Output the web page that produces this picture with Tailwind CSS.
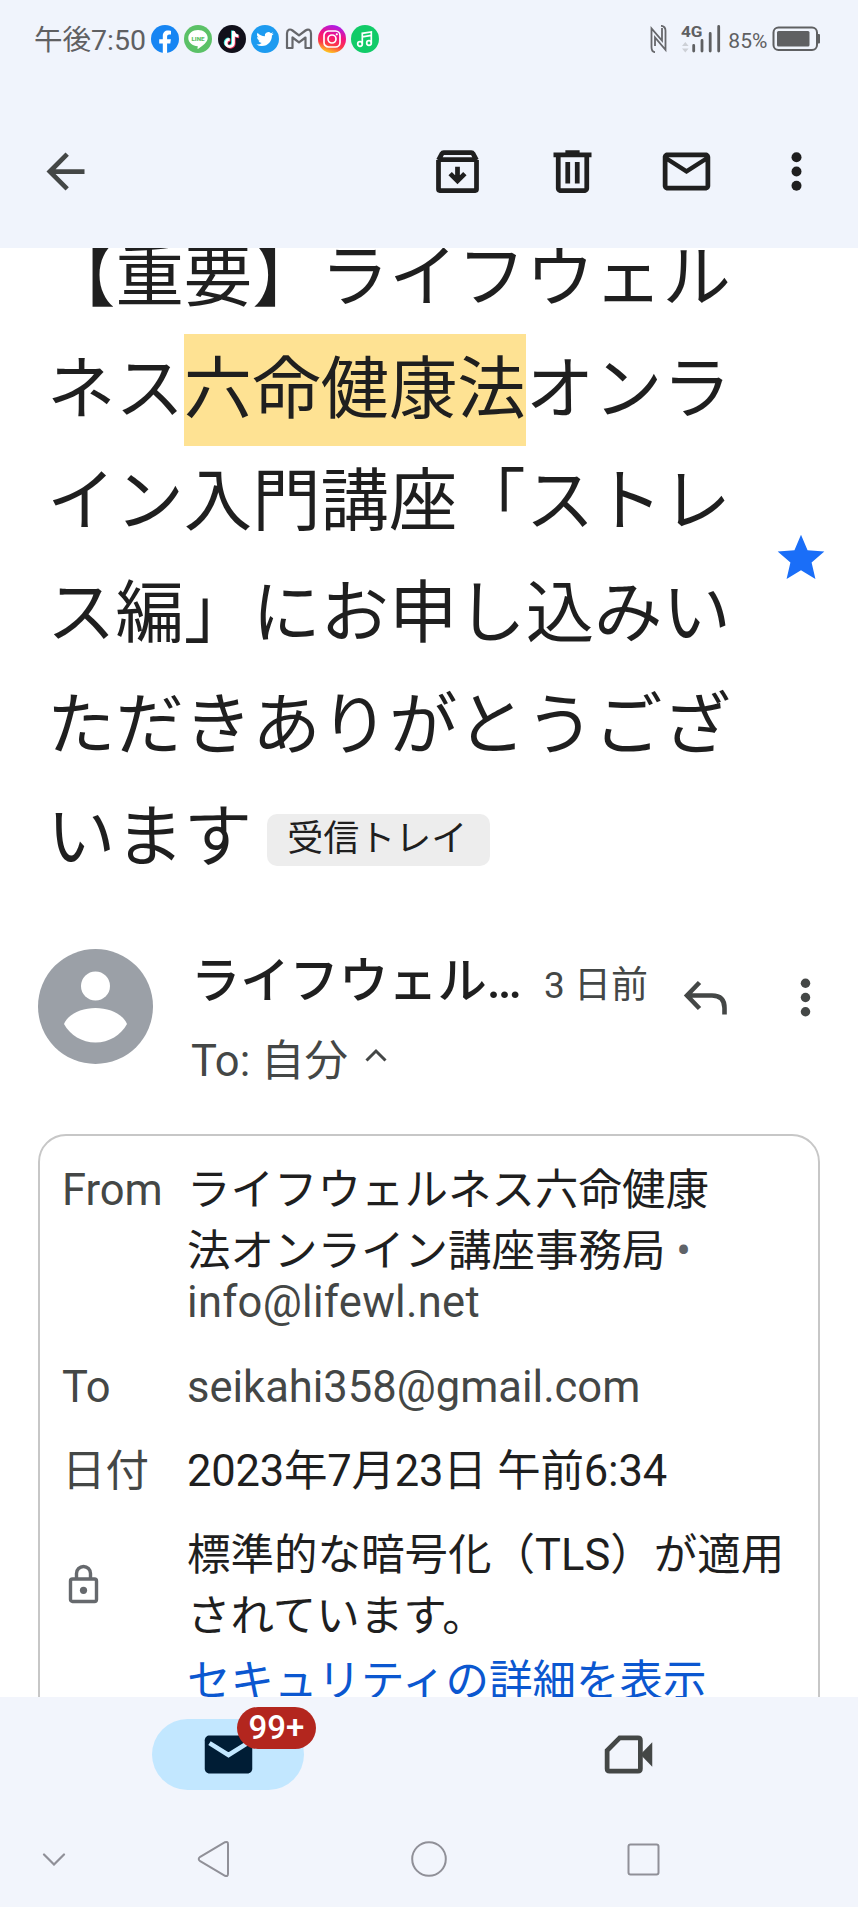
<!DOCTYPE html>
<html lang="ja">
<head>
<meta charset="utf-8">
<title>Gmail</title>
<script src="https://cdn.jsdelivr.net/npm/@tailwindcss/browser@4"></script>
</head>
<body class="bg-white">
<div class="flex h-[1907px] w-[858px] flex-col overflow-hidden bg-white font-['Roboto','Noto_Sans_CJK_JP',sans-serif] text-[#1f1f1f] [text-spacing-trim:space-all]">

  <header class="h-[248px] shrink-0 bg-[#f0f4fc]">
    <!-- Status bar -->
    <div class="flex h-[78px] items-center pl-[34px] text-[#5f6062]">
      <div class="w-[117px] whitespace-nowrap text-[28.500px] leading-[32px] pt-[3px]">午後7:50</div>
      <div class="flex gap-[5.4px]">
        <svg class="size-7" viewBox="0 0 28 28"><circle cx="14" cy="14" r="14" fill="#1685f3"/><path d="M11.8 28v-9.500H8.200v-4.200h3.600v-3.100c0-3.700 2.100-5.600 5.300-5.600 1.500 0 2.900.3 2.900.3v3.500h-1.700c-1.700 0-2.200 1-2.200 2.100v2.800h3.800l-.6 4.200h-3.200V28z" fill="#fff"/></svg>
        <svg class="size-7" viewBox="0 0 28 28"><circle cx="14" cy="14" r="14" fill="#5bc167"/><path d="M14 5c5.500 0 9.700 3.500 9.700 8 0 4-4.700 7.700-9.400 10.800-.7.400-.9 0-.8-.6l.3-2C8.500 21 4.300 17.500 4.300 13 4.300 8.500 8.500 5 14 5z" fill="#fff"/><text x="14" y="15.500" text-anchor="middle" font-size="6.200" font-weight="900" fill="#5bc167">LINE</text></svg>
        <svg class="size-7" viewBox="0 0 28 28"><circle cx="14" cy="14" r="14" fill="#11101b"/><g fill="none" stroke-width="2.800"><path d="M14.500 5.500v12a3.700 3.700 0 1 1-3.700-3.700M14.500 6c.4 2.800 2.200 4.300 5 4.500" stroke="#35e6e0"/><path d="M16.200 6.700v12a3.700 3.700 0 1 1-3.700-3.700M16.200 7c.4 2.800 2.200 4.600 5 4.800" stroke="#f4315a"/><path d="M15.400 6v12a3.700 3.700 0 1 1-3.700-3.700M15.400 6.500c.4 2.800 2.200 4.300 5 4.500" stroke="#fff"/></g></svg>
        <svg class="size-7" viewBox="0 0 28 28"><circle cx="14" cy="14" r="14" fill="#1d9bf0"/><path transform="translate(5.400 5.400) scale(.72)" d="M23.950 4.570a10 10 0 0 1-2.820.77 4.960 4.960 0 0 0 2.160-2.720c-.95.56-2 .96-3.130 1.190a4.920 4.920 0 0 0-8.380 4.480C7.690 8.090 4.070 6.130 1.640 3.160a4.920 4.920 0 0 0 1.520 6.570 4.900 4.900 0 0 1-2.230-.61v.06a4.920 4.920 0 0 0 3.950 4.830 5 5 0 0 1-2.210.08 4.940 4.940 0 0 0 4.600 3.420A9.870 9.870 0 0 1 0 19.540a14 14 0 0 0 7.550 2.210c9.050 0 14-7.500 14-13.980 0-.21 0-.42-.02-.63a9.900 9.900 0 0 0 2.420-2.570z" fill="#fff"/></svg>
        <svg class="size-7" viewBox="0 0 28 28"><path d="M2 23V8.500C2 4.500 5 3.600 7.500 5.500L14 10.400l6.500-4.900C23 3.600 26 4.500 26 8.500V23h-5.500V12.500L14 17.400l-6.500-4.900V23z" fill="none" stroke="#66676b" stroke-width="2.200" stroke-linejoin="round"/></svg>
        <svg class="size-7" viewBox="0 0 28 28"><defs><linearGradient id="ig" x1=".65" y1="0" x2=".35" y2="1"><stop offset="0" stop-color="#a81df0"/><stop offset=".4" stop-color="#f5127d"/><stop offset=".7" stop-color="#fc3a45"/><stop offset="1" stop-color="#ffd51e"/></linearGradient></defs><circle cx="14" cy="14" r="14" fill="url(#ig)"/><rect x="6" y="6" width="16" height="16" rx="4.500" fill="none" stroke="#fff" stroke-width="1.700"/><circle cx="14" cy="14" r="4" fill="none" stroke="#fff" stroke-width="1.700"/><circle cx="18.800" cy="9.300" r="1.100" fill="#fff"/></svg>
        <svg class="size-7" viewBox="0 0 28 28"><circle cx="14" cy="14" r="14" fill="#11cb68"/><g fill="none" stroke="#fff" stroke-width="1.700"><path d="M11.300 18.700V8.300l9-1.400v10.800M11.300 11.800l9-1.400"/><circle cx="9" cy="19" r="2.300"/><circle cx="18" cy="18" r="2.300"/></g></svg>
      </div>
      <svg class="ml-[271px] h-7 w-[17px]" viewBox="0 0 17 28" fill="none" stroke="#66676b" stroke-width="1.800"><path d="M5 27.200C2.500 27 1.500 25 1.500 22V3.500l10.500 12V3M11 .8c3 .2 4.500 2 4.500 5v19L5 12.500V21"/></svg>
      <svg class="ml-[14px] h-7 w-10" viewBox="0 0 40 28"><text x="0" y="12" font-size="15.500" font-weight="700" fill="#5f6062" textLength="21.500" lengthAdjust="spacingAndGlyphs">4G</text><path d="M1 21l3.300-4 3.300 4zM1 23.500h6.600L4.300 27.500z" fill="#cdd0d6"/><path d="M12.700 20.500V26M21 15.500V26M29.200 8.500V26M37.700 1.500V26" stroke="#5f6062" stroke-width="2.800" stroke-linecap="round"/></svg>
      <div class="ml-[7px] w-[44px] pt-[3px] text-[21px] leading-6">85%</div>
      <svg class="h-[26px] w-[48px]" viewBox="0 0 48 26"><rect x="1.500" y="1.500" width="43.500" height="22.500" rx="5" fill="none" stroke="#5f6062" stroke-width="2"/><rect x="5" y="5" width="32.500" height="15.500" rx="1.500" fill="#5f6062"/><path d="M45.500 8h1.500q1 0 1 1v7.500q0 1-1 1h-1.500z" fill="#5f6062"/></svg>
    </div>
    <!-- Message toolbar -->
    <div class="flex h-[187px] items-center pl-[37px]">
      <svg class="mr-[335px] size-[57px] shrink-0" viewBox="0 0 24 24" fill="#444746"><path d="M20 11H7.830l5.590-5.590L12 4l-8 8 8 8 1.410-1.410L7.830 13H20z"/></svg>
      <svg class="mr-[57.500px] size-[57px] shrink-0" viewBox="0 0 24 24" fill="none" stroke="#1f1f1f" stroke-width="2"><path d="M4 7.200V19.500q0 .5.5.5h15q.5 0 .5-.5V7.200"/><path d="M4 7.200L5.500 4.400q.2-.4.700-.4h11.600q.5 0 .7.400L20 7.200M4 7h16" /><path d="M12 10v5.800M8.900 12.900l3.100 3.100 3.100-3.100"/></svg>
      <svg class="mr-[57.500px] size-[57px] shrink-0" viewBox="0 0 24 24" fill="#1f1f1f"><path d="M15 4V3H9v1H4v2h1v13c0 1.100.9 2 2 2h10c1.100 0 2-.9 2-2V6h1V4zm2 15H7V6h10zM9 8h2v9H9zm4 0h2v9h-2z"/></svg>
      <svg class="mr-[52.500px] size-[57px] shrink-0" viewBox="0 0 24 24" fill="#1f1f1f"><path d="M22 6c0-1.100-.9-2-2-2H4c-1.100 0-2 .9-2 2v12c0 1.100.9 2 2 2h16c1.100 0 2-.9 2-2zm-2.400 0L12 10.800 4.400 6zM20 18H4V7.900l8 5.200 8-5.200z"/></svg>
      <svg class="size-[57px] shrink-0" viewBox="0 0 24 24" fill="#1f1f1f"><circle cx="12" cy="6" r="2.100"/><circle cx="12" cy="12" r="2.100"/><circle cx="12" cy="18" r="2.100"/></svg>
    </div>
  </header>

  <main class="h-[1449px] shrink-0 overflow-hidden">
    <!-- Subject -->
    <section class="-mt-[26px] flex h-[672px] items-center pl-[47px]">
      <h1 class="h-[672px] w-[726px] shrink-0 whitespace-nowrap text-[68.400px] leading-[112px] font-normal">【重要】ライフウェル<br>ネス<span class="inline-block h-[112px] bg-[#fee293] align-top">六命健康法</span>オンラ<br>イン入門講座「ストレ<br>ス編」にお申し込みい<br>ただきありがとうござ<br>います<span class="ml-[15px] inline-block h-[52px] w-[223px] rounded-[10px] bg-[#ededed] pl-[20px] align-[10px] text-[36px] leading-[50px]">受信トレイ</span></h1>
      <svg class="size-[56px] shrink-0" viewBox="0 0 24 24" fill="#1a6ef8"><path d="M12 17.270L18.180 21l-1.640-7.030L22 9.240l-7.190-.61L12 2 9.190 8.630 2 9.240l5.460 4.730L5.820 21z"/></svg>
    </section>

    <!-- Sender -->
    <section class="mt-[55px] flex h-[142px] pl-[38px]">
      <svg class="size-[115px] shrink-0" viewBox="0 0 115 115"><circle cx="57.500" cy="57.500" r="57.500" fill="#9ba0a7"/><circle cx="57.500" cy="37" r="14.500" fill="#fff"/><path d="M26 75c4-10 18-16 31.500-16S85 65 89 75c-6 11-18 18.500-31.500 18.500S32 86 26 75z" fill="#fff"/></svg>
      <div class="ml-[38px] w-[472px] shrink-0">
        <div class="flex items-baseline whitespace-nowrap leading-[64px]">
          <div class="w-[353px] text-[49.300px] font-medium">ライフウェル…</div>
          <div class="text-[37px] text-[#444746]">3 日前</div>
        </div>
        <div class="mt-[14px] flex items-center text-[43.500px] leading-[60px] text-[#444746]">
          <span class="w-[174px] whitespace-nowrap">To: 自分</span>
          <svg class="mt-[-14px] h-[14px] w-[22px]" viewBox="0 0 22 14" fill="none" stroke="#444746" stroke-width="3"><path d="M1.500 12.500L11 3l9.500 9.500"/></svg>
        </div>
      </div>
      <svg class="mt-[31px] ml-[20px] h-[36px] w-[46px] shrink-0" viewBox="0 0 46 36" fill="none" stroke="#444746" stroke-width="4.600"><path d="M16.500 2.500L4 15.500l12.500 13M4 15.500h25q12.500 0 12.500 12.500v6.500"/></svg>
      <svg class="mt-[19.500px] ml-[48px] size-[57px] shrink-0" viewBox="0 0 24 24" fill="#444746"><circle cx="12" cy="6" r="2"/><circle cx="12" cy="12" r="2"/><circle cx="12" cy="18" r="2"/></svg>
    </section>

    <!-- Message details -->
    <section class="mt-[43px] ml-[38px] flex h-[640px] w-[782px] flex-col rounded-[28px] border-2 border-[#c7c7c7] pt-[25px] pl-[22px] text-[43.500px] leading-[60.500px] whitespace-nowrap">
      <div class="flex h-[202px]">
        <div class="w-[125px] text-[#444746]">From</div>
        <div>ライフウェルネス六命健康<br>法オンライン講座事務局 <span class="text-[#5f6368]">•</span><div class="leading-[42px] tracking-[0.300px] text-[#444746]">info@lifewl.net</div></div>
      </div>
      <div class="flex h-[79px] leading-[50px] text-[#444746]">
        <div class="w-[125px]">To</div>
        <div>seikahi358@gmail.com</div>
      </div>
      <div class="flex h-[84px]">
        <div class="w-[125px] text-[#444746]">日付</div>
        <div class="tracking-[-0.200px]">2023年7月23日 午前6:34</div>
      </div>
      <div class="flex">
        <div class="w-[125px] pt-[38px] pl-[6px]">
          <svg class="h-[40px] w-[31px]" viewBox="0 0 31 40"><rect x="2.500" y="15" width="26" height="22.500" rx="2" fill="none" stroke="#66696d" stroke-width="3.400"/><path d="M8.500 15V9.500a7 7 0 0 1 14 0V15" fill="none" stroke="#66696d" stroke-width="3.400"/><circle cx="15.500" cy="26.300" r="3.600" fill="#66696d"/></svg>
        </div>
        <div>標準的な暗号化（TLS）が適用<br>されています。<div class="leading-[70px] text-[#0b57d0]">セキュリティの詳細を表示</div></div>
      </div>
    </section>
  </main>

  <footer class="h-[210px] shrink-0 bg-[#f2f5fc]">
    <!-- App tabs -->
    <div class="flex pt-[22px] pl-[152px]">
      <div class="relative flex h-[71px] w-[152px] items-center justify-center rounded-full bg-[#c2e7ff]">
        <svg class="size-[57px]" viewBox="0 0 24 24" fill="#001d35"><path d="M20 4H4c-1.100 0-2 .9-2 2v12c0 1.100.9 2 2 2h16c1.100 0 2-.9 2-2V6c0-1.100-.9-2-2-2z"/><path d="M4 7.200l8 5 8-5" fill="none" stroke="#c2e7ff" stroke-width="1.900"/></svg>
        <div class="absolute -top-[12px] left-[85px] h-[42px] w-[79px] rounded-full bg-[#b3261e] text-center text-[33px] leading-[42px] font-medium text-white">99+</div>
      </div>
      <svg class="mt-[7px] ml-[296px] size-[57px]" viewBox="0 0 24 24"><path d="M8.300 5H16q1 0 1 1v12q0 1-1 1H4q-1 0-1-1v-7.700z" fill="none" stroke="#444746" stroke-width="2"/><path d="M17 12l5-5.200v10.400z" fill="#444746"/></svg>
    </div>
    <!-- System navigation -->
    <div class="flex h-[138px] items-center pl-[42px]">
      <svg class="h-[13px] w-[24px]" viewBox="0 0 24 13" fill="none" stroke="#909098" stroke-width="2.200" stroke-linecap="round"><path d="M2 1.500l10 10 10-10"/></svg>
      <svg class="ml-[131px] h-[38px] w-[33px]" viewBox="0 0 33 38" fill="none" stroke="#909098" stroke-width="2"><path d="M28 2.200L3.200 16.800q-3 2.200 0 4.400L28 35.800q3 1 3-2V4.200q0-3-3-2z"/></svg>
      <svg class="ml-[181px] size-[36px]" viewBox="0 0 36 36" fill="none" stroke="#909098" stroke-width="2"><circle cx="18" cy="18" r="16.800"/></svg>
      <svg class="ml-[180px] size-[33px]" viewBox="0 0 33 33" fill="none" stroke="#909098" stroke-width="2"><rect x="1.500" y="1.500" width="30" height="30" rx="2"/></svg>
    </div>
  </footer>
</div>
</body>
</html>
